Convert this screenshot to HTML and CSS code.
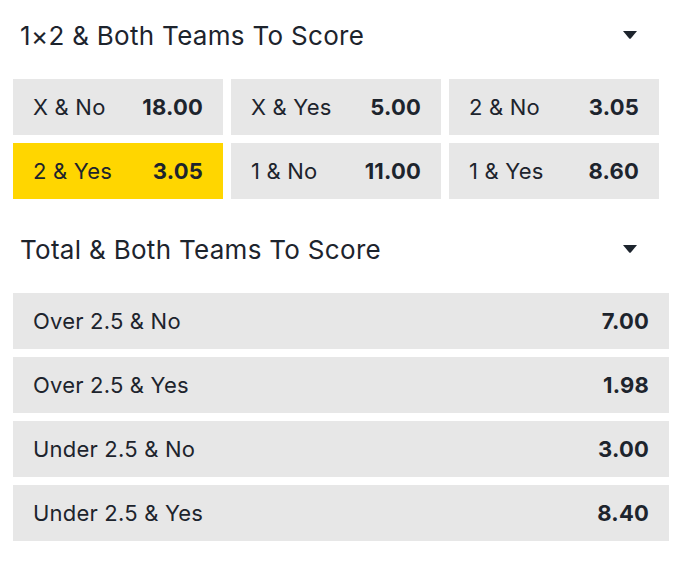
FILE: index.html
```html
<!DOCTYPE html>
<html lang="en">
<head>
  <meta charset="UTF-8">
  <title>Markets</title>
  <meta name="viewport" content="width=device-width, initial-scale=1">
  <link rel="stylesheet" href="styles.css">
</head>
<body>

  <div class="market">
    <div class="market-head">
      <h2>1×2 &amp; Both Teams To Score</h2>
      <svg class="caret" viewBox="0 0 14 8"><path d="M0 0h14l-6 7.2q-1 1-2 0z"/></svg>
    </div>
    <div class="grid">
      <button class="odd"><span>X &amp; No</span><b>18.00</b></button>
      <button class="odd"><span>X &amp; Yes</span><b>5.00</b></button>
      <button class="odd"><span>2 &amp; No</span><b>3.05</b></button>
      <button class="odd selected"><span>2 &amp; Yes</span><b>3.05</b></button>
      <button class="odd"><span>1 &amp; No</span><b>11.00</b></button>
      <button class="odd"><span>1 &amp; Yes</span><b>8.60</b></button>
    </div>
  </div>

  <div class="market">
    <div class="market-head">
      <h2>Total &amp; Both Teams To Score</h2>
      <svg class="caret" viewBox="0 0 14 8"><path d="M0 0h14l-6 7.2q-1 1-2 0z"/></svg>
    </div>
    <div class="list">
      <button class="odd"><span>Over 2.5 &amp; No</span><b>7.00</b></button>
      <button class="odd"><span>Over 2.5 &amp; Yes</span><b>1.98</b></button>
      <button class="odd"><span>Under 2.5 &amp; No</span><b>3.00</b></button>
      <button class="odd"><span>Under 2.5 &amp; Yes</span><b>8.40</b></button>
    </div>
  </div>

</body>
</html>
```

FILE: styles.css
```css
body {
  font-family: Inter, "Noto Sans", sans-serif;
  margin: 0;
  padding: 7px 14px 0 13px;
  background-color: #fff;
  color: #1d242d;
}

.market {
  margin-bottom: 22px;
}

.market-head {
  display: flex;
  align-items: center;
  justify-content: space-between;
  height: 56px;
  padding: 0 32px 0 7px;
  margin-bottom: 16px;
}

.market-head h2 {
  margin: 0;
  font-size: 26px;
  font-weight: 400;
  letter-spacing: 0.3px;
}

.caret {
  width: 14px;
  height: 8px;
  fill: #1d242d;
}

.grid {
  display: grid;
  grid-template-columns: repeat(3, 210px);
  gap: 8px;
}

.list {
  display: flex;
  flex-direction: column;
  gap: 8px;
}

.odd {
  display: flex;
  align-items: center;
  justify-content: space-between;
  height: 56px;
  padding: 0 20px;
  border: none;
  background-color: #e7e7e7;
  font-family: inherit;
  font-size: 22px;
  letter-spacing: 0.2px;
  color: inherit;
  text-align: left;
}

.odd b {
  font-weight: 700;
}

.odd.selected {
  background-color: #ffd600;
}
```
